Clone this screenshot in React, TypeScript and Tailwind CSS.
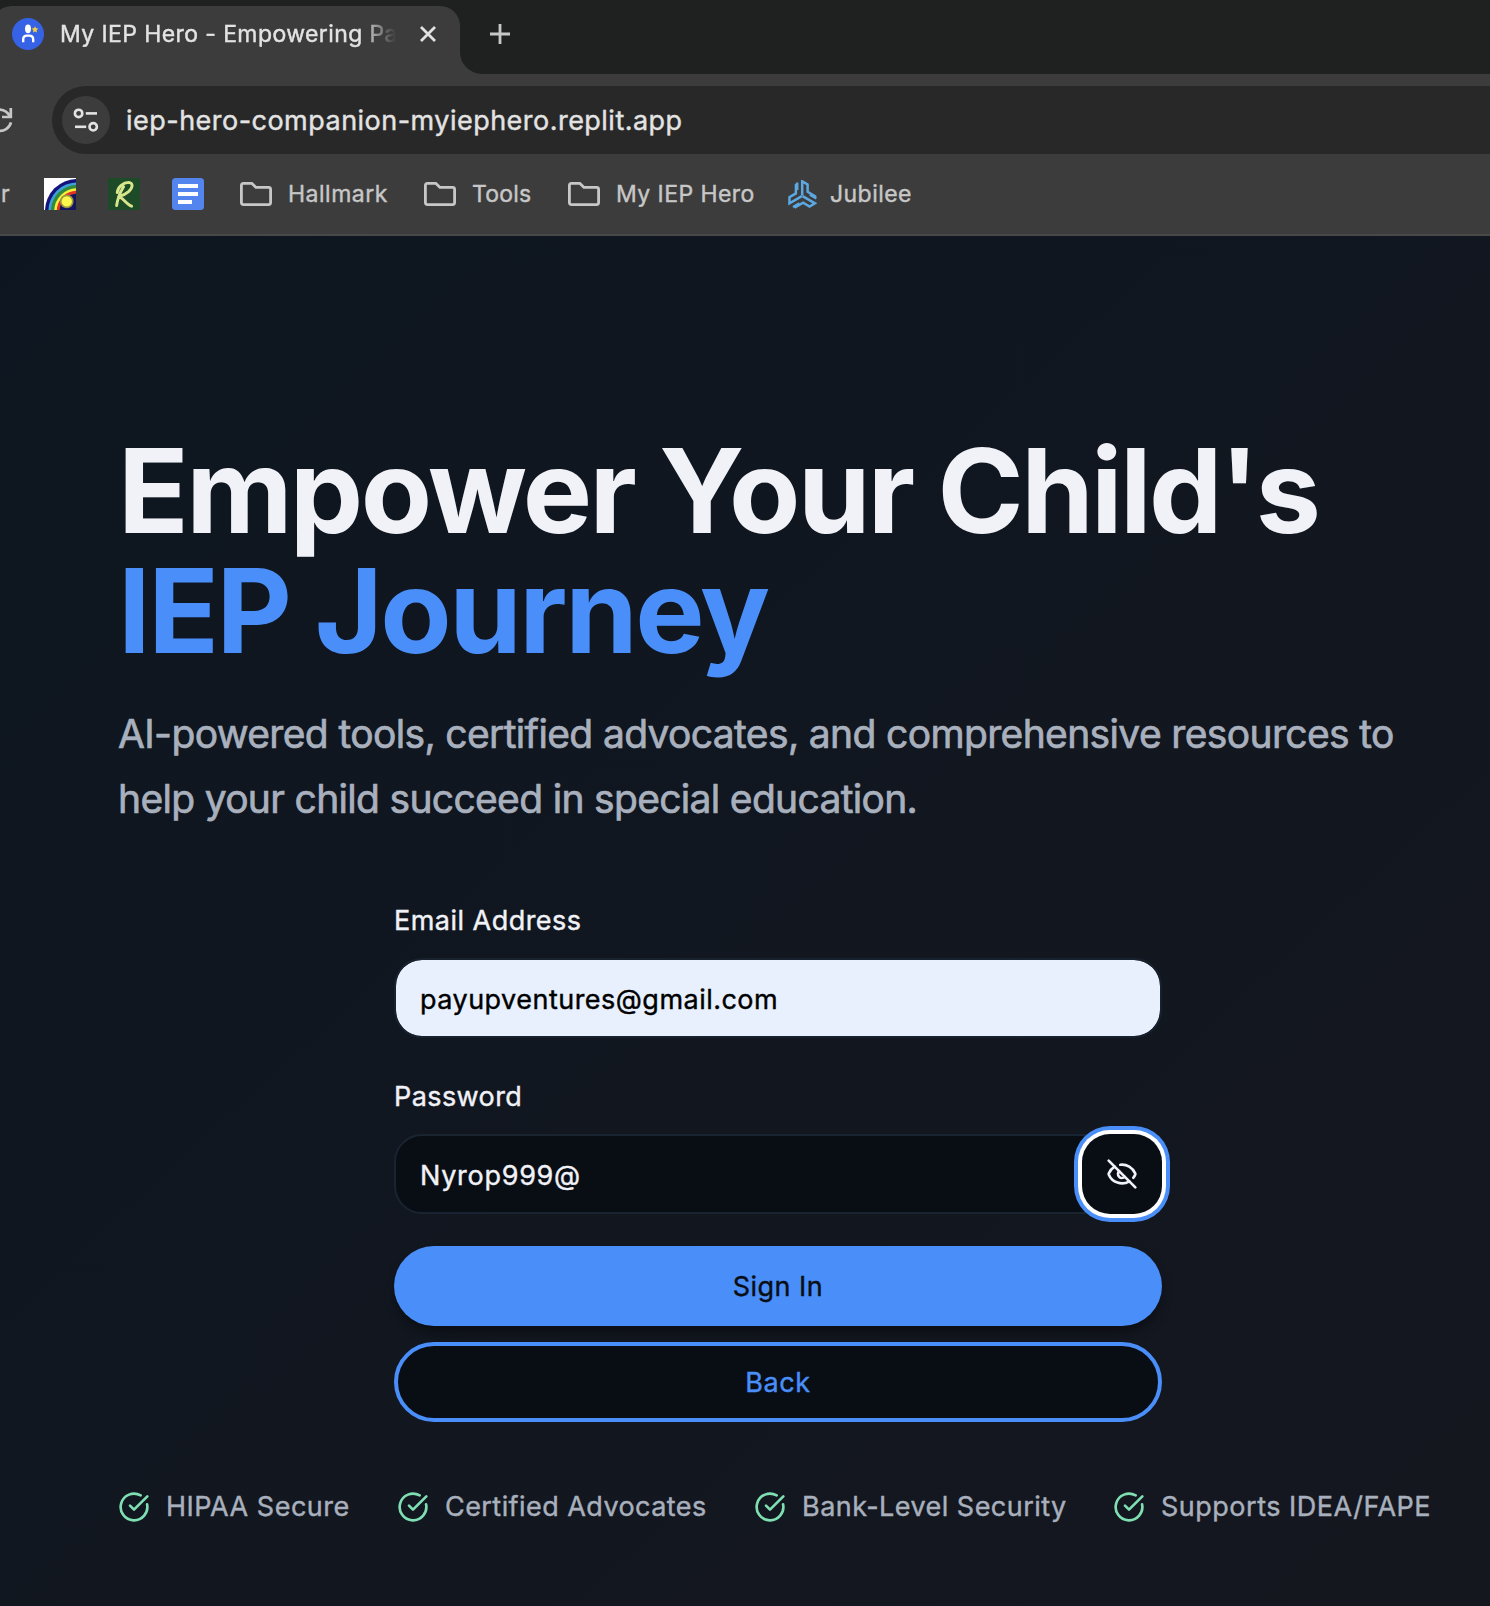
import React, { useState } from 'react';
import { CircleCheckBig, EyeOff } from 'lucide-react';

function SiteIcon() {
  return (
    <svg width="32" height="32" viewBox="0 0 32 32" className="shrink-0">
      <circle cx="16" cy="16" r="16" fill="#3662e6" />
      <ellipse cx="16" cy="10.8" rx="3" ry="4.4" fill="#fff" />
      <path d="M11.2 24.3V21.5Q11.2 17.6 15 17.6H17.2Q21.2 17.6 21.2 21.5V24.3" fill="none" stroke="#fff" strokeWidth="2.4" />
      <path d="M23 8.2l1 2.1 2.3.3-1.7 1.6.4 2.3-2-1.1-2 1.1.4-2.3-1.7-1.6 2.3-.3z" fill="#f6cf3c" />
    </svg>
  );
}

function ReloadIcon() {
  return (
    <svg width="14" height="28" viewBox="0 0 14 28" fill="none" stroke="#c7c7c7" strokeWidth="2.7" className="shrink-0">
      <path d="M-2 3.6C4 3.4 8 6.5 10 10.5" />
      <path d="M10.8 2V11H2" />
      <path d="M6.5 11L11 6.5V11Z" fill="#c7c7c7" stroke="none" />
      <path d="M11 16.4A11.2 11.2 0 0 1 -2 24.6" />
    </svg>
  );
}

function TuneIcon() {
  return (
    <svg width="26" height="26" viewBox="0 0 26 26" fill="none" stroke="#e3e3e3" strokeWidth="2.6">
      <circle cx="5.6" cy="6.4" r="3.7" />
      <path d="M12.8 6.4H24" />
      <path d="M2 19.8H13.2" />
      <circle cx="20.2" cy="19.8" r="3.7" />
    </svg>
  );
}

function FolderIcon() {
  return (
    <svg width="32" height="24" viewBox="0 0 32 24" fill="none" stroke="#c7c7c7" strokeWidth="2.8" strokeLinejoin="round" className="shrink-0">
      <path d="M3.4 1.4H12L16 5.4H28.6Q30.6 5.4 30.6 7.4V20.6Q30.6 22.6 28.6 22.6H3.4Q1.4 22.6 1.4 20.6V3.4Q1.4 1.4 3.4 1.4Z" />
    </svg>
  );
}

function RainbowIcon() {
  return (
    <svg width="32" height="32" viewBox="0 0 32 32" className="shrink-0">
      <rect width="32" height="32" fill="#fff" />
      <circle cx="33" cy="33" r="32" fill="#14147c" />
      <circle cx="33" cy="33" r="28.6" fill="#3f9fd8" />
      <circle cx="33" cy="33" r="26" fill="#2f8a3a" />
      <circle cx="33" cy="33" r="22.8" fill="#f4ee3d" />
      <circle cx="33" cy="33" r="20.2" fill="#e23325" />
      <circle cx="33" cy="33" r="17.4" fill="#15155f" />
      <circle cx="22.8" cy="23.4" r="6.8" fill="#9a9640" />
      <circle cx="22.8" cy="23.4" r="5.2" fill="#fdf84e" />
    </svg>
  );
}

function ScriptIcon() {
  return (
    <svg width="32" height="32" viewBox="0 0 32 32" className="shrink-0">
      <rect width="32" height="32" fill="#1d4a27" />
      <path d="M8.6 27.5C9.6 21 12 14.5 15.6 8.8M9.2 14.6C9.8 9 15.4 4.4 20.6 4.4C25.6 4.6 24.8 10 20.6 13.6C17.6 16.2 13.6 18 10.6 18.6C15 19.6 18.6 26.4 23.6 28.2" fill="none" stroke="#d8e68b" strokeWidth="2.9" strokeLinecap="round" strokeLinejoin="round" />
    </svg>
  );
}

function DocsIcon() {
  return (
    <svg width="32" height="32" viewBox="0 0 32 32" className="shrink-0">
      <rect width="32" height="32" rx="3.5" fill="#5485ee" />
      <path d="M6 6h20v4H6zM6 14h20v4H6zM6 22h14v4H6z" fill="#fff" />
    </svg>
  );
}

function JubileeIcon() {
  const arm = 'M14.2 15.6V1.3L19.6 4.4V11.8L28 16.8M9.2 2.5V10';
  return (
    <svg width="29" height="29" viewBox="0 0 29 29" fill="none" stroke="#5ba8e2" strokeWidth="2.5" className="shrink-0">
      <path d={arm} />
      <path d={arm} transform="rotate(120 14.2 16)" />
      <path d={arm} transform="rotate(240 14.2 16)" />
    </svg>
  );
}

function TabStrip() {
  return (
    <div className="flex h-[74px] bg-[#1f2120] pt-1.5">
      <div className="-ml-2 flex h-[68px] w-[468px] shrink-0 rounded-t-[20px] bg-[#3c3c3c] pl-5">
        <div className="flex h-14 items-center">
          <SiteIcon />
          <div className="ml-4 w-[336px] overflow-hidden whitespace-nowrap text-[23px] leading-8 tracking-[0.4px] text-[#e3e3e3] [mask-image:linear-gradient(to_right,black_300px,transparent_336px)]">
            My IEP Hero - Empowering Parents
          </div>
          <svg width="16" height="16" viewBox="0 0 16 16" stroke="#e3e3e3" strokeWidth="2.8" className="ml-6">
            <path d="M1 1l14 14M15 1L1 15" />
          </svg>
        </div>
      </div>
      <div className="h-[68px] w-[22px] bg-[#3c3c3c]">
        <div className="h-full rounded-bl-[22px] bg-[#1f2120]" />
      </div>
      <div className="flex h-14 items-center pl-2">
        <svg width="20" height="20" viewBox="0 0 20 20" stroke="#c7c7c7" strokeWidth="2.8">
          <path d="M10 0V20M0 10H20" />
        </svg>
      </div>
    </div>
  );
}

function Toolbar() {
  return (
    <div className="flex h-20 bg-[#3c3c3c] pt-3">
      <div className="flex w-[52px] shrink-0 items-center">
        <ReloadIcon />
      </div>
      <div className="flex h-[68px] grow items-center rounded-l-full bg-[#282828] pl-2.5">
        <div className="flex size-12 items-center justify-center rounded-full bg-[#3c3c3c]">
          <TuneIcon />
        </div>
        <span className="ml-4 pt-0.5 text-[27px] leading-10 tracking-[0.475px] text-[#e3e3e3]">
          iep-hero-companion-myiephero.replit.app
        </span>
      </div>
    </div>
  );
}

function BookmarksBar() {
  return (
    <div className="flex h-[82px] border-b-2 border-[#484848] bg-[#3c3c3c] text-[23px] leading-8 text-[#c7c7c7]">
      <div className="flex h-20 items-center">
        <span className="w-11 pl-px">r</span>
        <div className="flex w-[196px] gap-8">
          <RainbowIcon />
          <ScriptIcon />
          <DocsIcon />
        </div>
        <div className="flex w-[184px] items-center gap-4">
          <FolderIcon />
          <span className="tracking-[0.5px]">Hallmark</span>
        </div>
        <div className="flex w-36 items-center gap-4">
          <FolderIcon />
          <span className="tracking-[0.2px]">Tools</span>
        </div>
        <div className="flex w-[220px] items-center gap-4">
          <FolderIcon />
          <span className="tracking-[0.42px]">My IEP Hero</span>
        </div>
        <div className="flex items-center gap-[13px]">
          <JubileeIcon />
          <span className="tracking-[0.44px]">Jubilee</span>
        </div>
      </div>
    </div>
  );
}

function LoginForm() {
  const [email, setEmail] = useState('payupventures@gmail.com');
  const [password, setPassword] = useState('Nyrop999@');
  return (
    <form className="mt-[70px] ml-[276px] flex w-[768px] flex-col text-[27px]" onSubmit={(e) => e.preventDefault()}>
      <label htmlFor="email" className="leading-10 tracking-[0.47px] text-[#f1f2f7]">
        Email Address
      </label>
      <input
        id="email"
        value={email}
        onChange={(e) => setEmail(e.target.value)}
        className="mt-[17px] h-20 rounded-[28px] border-2 border-[#18212e] bg-[#e8f0fe] bg-clip-padding px-6 pt-0.5 tracking-[0.48px] text-black outline-none"
      />
      <label htmlFor="password" className="mt-[39px] leading-10 tracking-[0.42px] text-[#f1f2f7]">
        Password
      </label>
      <div className="relative mt-[17px]">
        <input
          id="password"
          value={password}
          onChange={(e) => setPassword(e.target.value)}
          className="block h-20 w-full rounded-[28px] border-2 border-[#1a2431] bg-[#090e15] px-6 pt-0.5 tracking-[0.72px] text-[#f1f2f7] outline-none"
        />
        <button
          type="button"
          aria-label="Hide password"
          className="absolute top-0 right-0 flex size-20 items-center justify-center rounded-[28px] bg-[#090e15] text-[#f1f2f7] shadow-[0_0_0_4px_#ffffff,0_0_0_8px_#4a8ff9]"
        >
          <EyeOff size={32} />
        </button>
      </div>
      <button type="submit" className="mt-8 h-20 rounded-full bg-[#4a8ff9] pt-0.5 tracking-[0.5px] text-[#090e15] shadow-[0_8px_12px_-2px_rgba(0,0,0,0.4)]">
        Sign In
      </button>
      <button type="button" className="mt-4 h-20 rounded-full border-4 border-[#4a8ff9] bg-[#090e15] pt-0.5 tracking-[0.65px] text-[#4a8ff9]">
        Back
      </button>
    </form>
  );
}

function Assurance({ label, className }: { label: string; className: string }) {
  return (
    <div className={'flex items-center gap-4 whitespace-nowrap ' + className}>
      <CircleCheckBig size={32} className="shrink-0 text-[#7fdfb3]" />
      <span>{label}</span>
    </div>
  );
}

export default function App() {
  return (
    <div className="flex h-[1606px] w-[1490px] flex-col overflow-hidden font-['Inter',sans-serif] [-webkit-text-stroke:0.4px_currentColor]">
      <TabStrip />
      <Toolbar />
      <BookmarksBar />
      <main className="grow bg-linear-to-br from-[#0d1620] to-[#15171f] pt-[195px] pl-[118px]">
        <h1 className="text-[116.5px] leading-[120px] font-bold whitespace-nowrap [-webkit-text-stroke:0]">
          <span className="block tracking-[-2.62px] text-[#f1f2f7]">Empower Your Child's</span>
          <span className="block tracking-[-2.47px] text-[#4a8ff9]">IEP Journey</span>
        </h1>
        <p className="mt-[30px] text-[39px] leading-[65px] whitespace-nowrap text-[#a9b0bd] [-webkit-text-stroke:0.7px_currentColor]">
          <span className="block tracking-[-0.64px]">
            AI-powered tools, certified advocates, and comprehensive resources to
          </span>
          <span className="block tracking-[-0.68px]">help your child succeed in special education.</span>
        </p>
        <LoginForm />
        <div className="mt-[65px] flex text-[27px] leading-10 text-[#a9b0bd]">
          <Assurance label="HIPAA Secure" className="w-[279px] tracking-[0.5px]" />
          <Assurance label="Certified Advocates" className="w-[357px] tracking-[0.44px]" />
          <Assurance label="Bank-Level Security" className="w-[359px] tracking-[0.46px]" />
          <Assurance label="Supports IDEA/FAPE" className="tracking-[0.5px]" />
        </div>
      </main>
    </div>
  );
}
